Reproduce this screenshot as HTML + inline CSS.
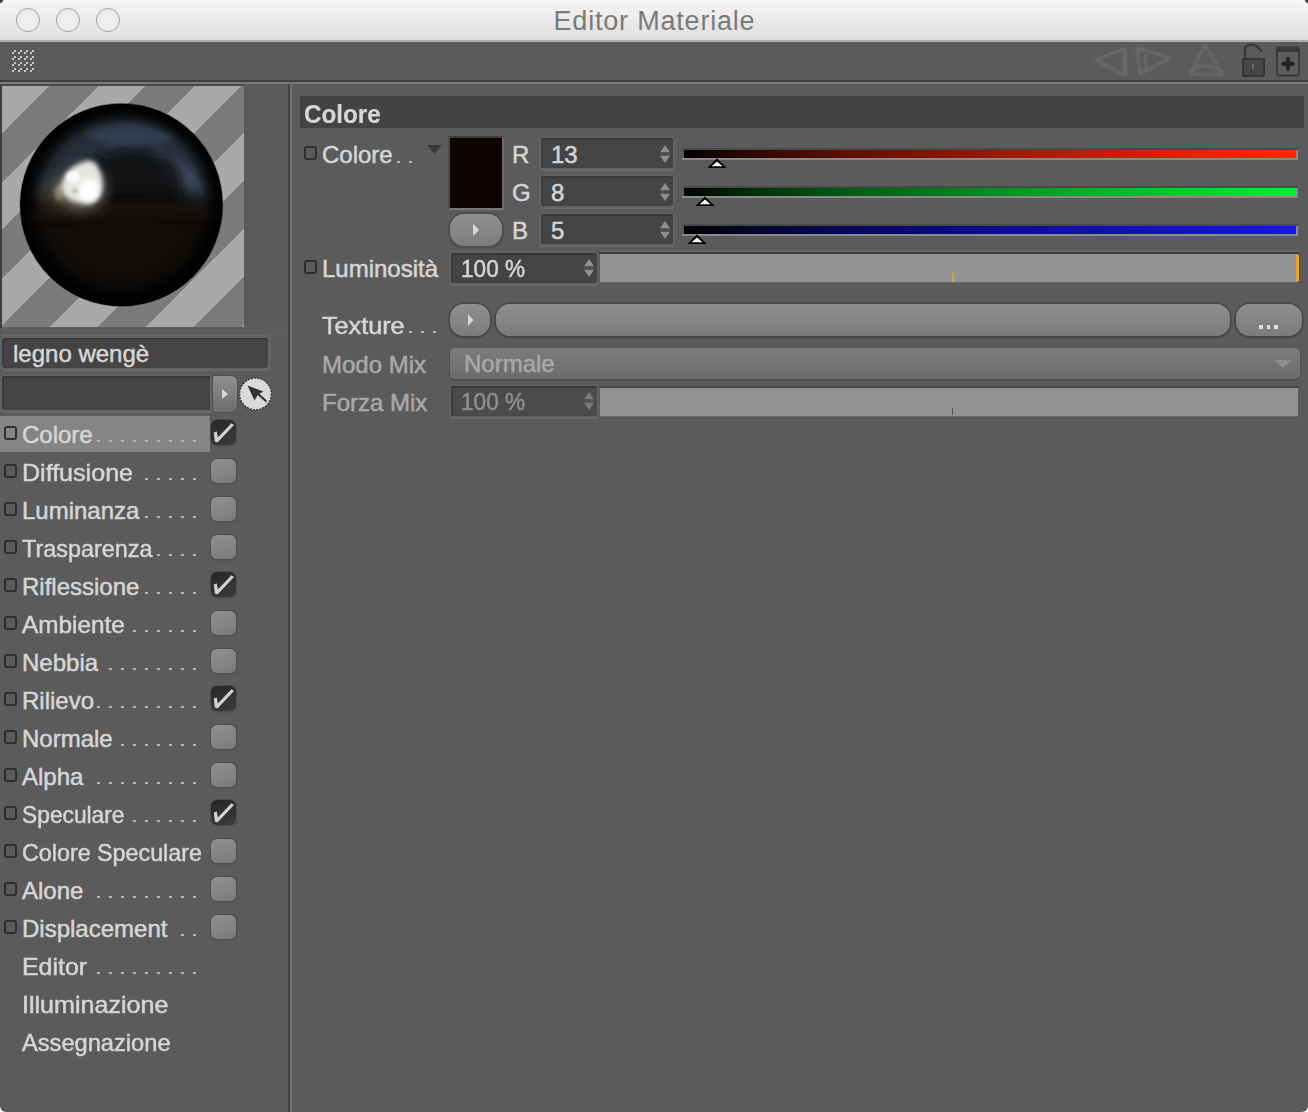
<!DOCTYPE html>
<html><head><meta charset="utf-8">
<style>
*{margin:0;padding:0;box-sizing:border-box}
html,body{width:1308px;height:1112px;overflow:hidden;background:#ffffff}
body{position:relative;font-family:"Liberation Sans",sans-serif}
.a{position:absolute}
#win{position:absolute;left:0;top:0;width:1308px;height:1112px;background:#5b5b5b;border-radius:5px 5px 6px 6px;overflow:hidden}
.lbl{position:absolute;color:#d6d6d6;font-size:24px;line-height:24px;white-space:nowrap;-webkit-text-stroke:0.5px currentColor}
.dim{color:#a9a9a9}
.dot{position:absolute;width:3px;height:2px;background:#b4b4b4}
.sq{position:absolute;width:13px;height:14px;border:2px solid #2f2f2f;border-radius:3px}
.cb{position:absolute;width:25px;height:24px;border-radius:6px;background:linear-gradient(160deg,#909090,#7a7a7a);box-shadow:0 0 0 1px #4e4e4e,0 1px 1px 1px #555}
.cbk{height:25px;background:linear-gradient(150deg,#262626,#3c3c3c)}
.fld{position:absolute;background:#444444;border-radius:2px;box-shadow:inset 0 2px 0 #393939,inset 2px 0 1px #3d3d3d,0 0 0 1.5px #626262,0 1.5px 0 1.5px #6a6a6a}
.spin{position:absolute;width:11px;height:19px}
</style></head><body>
<div id="win">

<div class="a" style="left:0;top:0;width:1308px;height:40px;background:linear-gradient(#f5f5f5,#ececec 45%,#dedede)"></div>
<div class="a" style="left:0;top:40px;width:1308px;height:2px;background:#adadad"></div>
<div class="a" style="left:16px;top:8px;width:24px;height:24px;border-radius:50%;border:1.7px solid #a3a3a3;background:radial-gradient(circle at 50% 60%,#f2f2f2,#ececec 60%,#e6e6e6)"></div>
<div class="a" style="left:56px;top:8px;width:24px;height:24px;border-radius:50%;border:1.7px solid #a3a3a3;background:radial-gradient(circle at 50% 60%,#f2f2f2,#ececec 60%,#e6e6e6)"></div>
<div class="a" style="left:96px;top:8px;width:24px;height:24px;border-radius:50%;border:1.7px solid #a3a3a3;background:radial-gradient(circle at 50% 60%,#f2f2f2,#ececec 60%,#e6e6e6)"></div>
<div class="a" style="left:0;top:7px;width:1308px;text-align:center;font-size:27px;line-height:28px;color:#7a7a7a;letter-spacing:0.8px;padding-left:1px">Editor Materiale</div>
<div class="a" style="left:0;top:42px;width:1308px;height:38px;background:#5b5b5b"></div>
<svg class="a" style="left:0;top:0" width="60" height="80"><rect x="12" y="52" width="2" height="2" fill="#c6c6c6"/><rect x="14" y="50" width="2" height="2" fill="#c6c6c6"/><rect x="12" y="58" width="2" height="2" fill="#c6c6c6"/><rect x="14" y="56" width="2" height="2" fill="#c6c6c6"/><rect x="12" y="64" width="2" height="2" fill="#c6c6c6"/><rect x="14" y="62" width="2" height="2" fill="#c6c6c6"/><rect x="12" y="70" width="2" height="2" fill="#c6c6c6"/><rect x="14" y="68" width="2" height="2" fill="#c6c6c6"/><rect x="18" y="52" width="2" height="2" fill="#c6c6c6"/><rect x="20" y="50" width="2" height="2" fill="#c6c6c6"/><rect x="18" y="58" width="2" height="2" fill="#c6c6c6"/><rect x="20" y="56" width="2" height="2" fill="#c6c6c6"/><rect x="18" y="64" width="2" height="2" fill="#c6c6c6"/><rect x="20" y="62" width="2" height="2" fill="#c6c6c6"/><rect x="18" y="70" width="2" height="2" fill="#c6c6c6"/><rect x="20" y="68" width="2" height="2" fill="#c6c6c6"/><rect x="24" y="52" width="2" height="2" fill="#c6c6c6"/><rect x="26" y="50" width="2" height="2" fill="#c6c6c6"/><rect x="24" y="58" width="2" height="2" fill="#c6c6c6"/><rect x="26" y="56" width="2" height="2" fill="#c6c6c6"/><rect x="24" y="64" width="2" height="2" fill="#c6c6c6"/><rect x="26" y="62" width="2" height="2" fill="#c6c6c6"/><rect x="24" y="70" width="2" height="2" fill="#c6c6c6"/><rect x="26" y="68" width="2" height="2" fill="#c6c6c6"/><rect x="30" y="52" width="2" height="2" fill="#c6c6c6"/><rect x="32" y="50" width="2" height="2" fill="#c6c6c6"/><rect x="30" y="58" width="2" height="2" fill="#c6c6c6"/><rect x="32" y="56" width="2" height="2" fill="#c6c6c6"/><rect x="30" y="64" width="2" height="2" fill="#c6c6c6"/><rect x="32" y="62" width="2" height="2" fill="#c6c6c6"/><rect x="30" y="70" width="2" height="2" fill="#c6c6c6"/><rect x="32" y="68" width="2" height="2" fill="#c6c6c6"/></svg>
<svg class="a" style="left:1090px;top:42px" width="218" height="38">
<defs><filter id="gb" x="-20%" y="-20%" width="140%" height="140%"><feGaussianBlur stdDeviation="0.8"/></filter></defs>
<g fill="none" stroke="#747474" stroke-width="2" stroke-linejoin="round" filter="url(#gb)" opacity="0.85">
<path d="M6 18 L35 6 L36 34 Z"/><path d="M34 14 L35 30"/><path d="M47 6 L80 16 L50 32 Z"/><path d="M55 12 L56 28"/>
<path d="M115 3 L133 33 L100 32 Z"/><path d="M103 27 Q116 20 131 29"/>
</g>
<path d="M155 16.5 L155 7 Q156 2.5 162 2.5 Q167 2.5 171.5 9.5" fill="none" stroke="#363636" stroke-width="2"/>
<rect x="153" y="17" width="21" height="17" fill="#464646" stroke="#333" stroke-width="1.8"/>
<rect x="162" y="22" width="2" height="5" fill="#6a6a6a"/>
<rect x="187" y="5.5" width="22" height="28" rx="1.5" fill="#5c5c5c" stroke="#383838" stroke-width="1.8"/>
<rect x="186" y="5" width="23" height="5" fill="#3a3a3a"/>
<path d="M198 17 V26.5 M193.3 21.7 H202.7" stroke="#262626" stroke-width="4.4" stroke-linecap="round"/>
</svg>
<div class="a" style="left:0;top:80px;width:1308px;height:2px;background:#404040"></div>
<div class="a" style="left:0;top:82px;width:1308px;height:2px;background:#7b7b7b"></div>
<div class="a" style="left:0;top:84px;width:244px;height:2px;background:#4a4a4a"></div>
<div class="a" style="left:288px;top:84px;width:2px;height:1040px;background:#434343"></div>
<div class="a" style="left:290px;top:82px;width:2px;height:1040px;background:#707070"></div>
<div class="a" style="left:0;top:84px;width:2px;height:244px;background:#3e3e3e"></div>
<div class="a" style="left:2px;top:86px;width:242px;height:241px;overflow:hidden;background:repeating-linear-gradient(135deg,#a9a9a9 0px,#a9a9a9 33.9px,#7b7b7b 33.9px,#7b7b7b 67.9px)">
<svg class="a" style="left:0;top:0" width="242" height="241">
<defs>
<clipPath id="sc"><circle cx="119.4" cy="118.9" r="101"/></clipPath>
<filter id="b8" x="-50%" y="-50%" width="200%" height="200%"><feGaussianBlur stdDeviation="8"/></filter>
<filter id="b4" x="-50%" y="-50%" width="200%" height="200%"><feGaussianBlur stdDeviation="4"/></filter>
<filter id="b3" x="-50%" y="-50%" width="200%" height="200%"><feGaussianBlur stdDeviation="2.5"/></filter>
<filter id="b2" x="-50%" y="-50%" width="200%" height="200%"><feGaussianBlur stdDeviation="1.5"/></filter>
<radialGradient id="base" cx="0.5" cy="0.45" r="0.55">
<stop offset="0" stop-color="#15100b"/><stop offset="0.7" stop-color="#0f0c09"/><stop offset="1" stop-color="#050404"/></radialGradient>
<radialGradient id="edge" cx="0.5" cy="0.5" r="0.5">
<stop offset="0.8" stop-color="#000" stop-opacity="0"/><stop offset="0.93" stop-color="#000" stop-opacity="0.75"/><stop offset="1" stop-color="#000" stop-opacity="1"/></radialGradient>
</defs>
<circle cx="119.4" cy="118.9" r="101.8" fill="#1a1a1a" opacity="0.6"/>
<g clip-path="url(#sc)">
<circle cx="119.4" cy="118.9" r="102" fill="url(#base)"/>
<path d="M30 112 Q45 40 120 30 Q195 32 212 105 L208 120 Q150 102 90 104 Z" fill="#28303c" filter="url(#b8)" opacity="0.95"/>
<path d="M80 48 Q130 28 175 50 Q160 62 110 60 Z" fill="#364255" filter="url(#b4)" opacity="0.85"/>
<path d="M150 62 Q192 72 200 104 Q182 102 160 92 Z" fill="#3c4a5f" filter="url(#b4)" opacity="0.95"/>
<path d="M88 78 Q98 66 110 70 Q120 58 132 68 Q142 60 152 70 Q166 64 176 82 Q182 98 178 122 L92 124 Q84 100 88 78 Z" fill="#0c0b0a" filter="url(#b4)" opacity="0.8"/>
<path d="M22 124 Q120 110 218 120 L218 134 Q120 124 22 138 Z" fill="#1d1711" filter="url(#b4)" opacity="0.85"/>
<g transform="translate(1,5)">
<ellipse cx="58" cy="104" rx="22" ry="16" fill="#6b5c3c" filter="url(#b8)" opacity="0.45"/>
<ellipse cx="80" cy="98" rx="20" ry="19" fill="#ffffff" filter="url(#b8)" opacity="0.6"/>
<path d="M58 96 Q62 78 78 72 Q90 66 95 76 Q102 88 98 102 Q92 114 78 112 Q60 108 58 96 Z" fill="#e6e6e2" filter="url(#b3)"/>
<ellipse cx="86" cy="100" rx="10" ry="12" fill="#ffffff" filter="url(#b3)"/>
<ellipse cx="70" cy="86" rx="7" ry="6" fill="#ffffff" filter="url(#b2)" opacity="0.8"/>
<ellipse cx="56" cy="102" rx="4" ry="8" fill="#c4ba88" filter="url(#b3)" opacity="0.6"/>
<ellipse cx="72" cy="100" rx="3.5" ry="2.5" fill="#a0a098" filter="url(#b2)" opacity="0.5"/>
</g>
<path d="M22 124 Q120 110 218 120 L218 134 Q120 124 22 138 Z" fill="#000" filter="url(#b4)" opacity="0.15"/>
<circle cx="119.4" cy="118.9" r="101.5" fill="url(#edge)"/>
</g>
</svg>
</div>
<div class="a" style="left:2px;top:327px;width:286px;height:9px;background:#5e5e5e"></div>
<div class="a" style="left:0px;top:335px;width:271px;height:36px;border-radius:3px;background:#616161;box-shadow:inset 0 1px 0 #686868"></div>
<div class="fld" style="left:2px;top:338px;width:266px;height:30px;border-radius:4px"></div>
<div class="lbl" style="left:13px;top:342px">legno wengè</div>
<div class="fld" style="left:2px;top:376px;width:208px;height:34px;border-radius:3px 0 0 3px"></div>
<div class="a" style="left:213px;top:376px;width:24px;height:36px;border-radius:2px 6px 6px 2px;background:linear-gradient(#8f8f8f,#6d6d6d);box-shadow:0 0 0 1px #4f4f4f"></div>
<svg class="a" style="left:213px;top:376px" width="24" height="36"><path d="M9 13 L15 18 L9 23 Z" fill="#d8d8d8"/></svg>
<svg class="a" style="left:238px;top:376px" width="36" height="36">
<circle cx="17.5" cy="18" r="16" fill="#dadada" stroke="#3a3a3a" stroke-width="1.6" stroke-dasharray="2 1.2"/>
<path d="M9.5 9.5 L25.5 15.5 L20 18.5 L16.5 24.5 Z" fill="#333"/>
<path d="M19 17 L28.5 25.5" stroke="#333" stroke-width="2.2"/>
</svg>
<div class="a" style="left:0;top:416px;width:210px;height:36px;background:#858585"></div>
<div class="sq" style="left:4px;top:426px"></div>
<div class="lbl" style="left:22px;top:423px">Colore</div>
<div class="dot" style="left:97px;top:440px"></div>
<div class="dot" style="left:109px;top:440px"></div>
<div class="dot" style="left:121px;top:440px"></div>
<div class="dot" style="left:133px;top:440px"></div>
<div class="dot" style="left:145px;top:440px"></div>
<div class="dot" style="left:157px;top:440px"></div>
<div class="dot" style="left:169px;top:440px"></div>
<div class="dot" style="left:181px;top:440px"></div>
<div class="dot" style="left:193px;top:440px"></div>
<div class="cb cbk" style="left:211px;top:420px"></div>
<svg class="a" style="left:211px;top:420px" width="25" height="25"><path d="M2.8 12.5 L5.8 11.5 L6.8 17.5 L20.5 3.2 L23 5 L6.5 22.5 L3.8 21.5 Z" fill="#d2d2d2"/></svg>
<div class="sq" style="left:4px;top:464px"></div>
<div class="lbl" style="left:22px;top:461px;transform:scaleX(1.045);transform-origin:1px 0">Diffusione</div>
<div class="dot" style="left:145px;top:478px"></div>
<div class="dot" style="left:157px;top:478px"></div>
<div class="dot" style="left:169px;top:478px"></div>
<div class="dot" style="left:181px;top:478px"></div>
<div class="dot" style="left:193px;top:478px"></div>
<div class="cb" style="left:211px;top:459px"></div>
<div class="sq" style="left:4px;top:502px"></div>
<div class="lbl" style="left:22px;top:499px">Luminanza</div>
<div class="dot" style="left:145px;top:516px"></div>
<div class="dot" style="left:157px;top:516px"></div>
<div class="dot" style="left:169px;top:516px"></div>
<div class="dot" style="left:181px;top:516px"></div>
<div class="dot" style="left:193px;top:516px"></div>
<div class="cb" style="left:211px;top:497px"></div>
<div class="sq" style="left:4px;top:540px"></div>
<div class="lbl" style="left:22px;top:537px;transform:scaleX(0.974);transform-origin:1px 0">Trasparenza</div>
<div class="dot" style="left:157px;top:554px"></div>
<div class="dot" style="left:169px;top:554px"></div>
<div class="dot" style="left:181px;top:554px"></div>
<div class="dot" style="left:193px;top:554px"></div>
<div class="cb" style="left:211px;top:535px"></div>
<div class="sq" style="left:4px;top:578px"></div>
<div class="lbl" style="left:22px;top:575px">Riflessione</div>
<div class="dot" style="left:145px;top:592px"></div>
<div class="dot" style="left:157px;top:592px"></div>
<div class="dot" style="left:169px;top:592px"></div>
<div class="dot" style="left:181px;top:592px"></div>
<div class="dot" style="left:193px;top:592px"></div>
<div class="cb cbk" style="left:211px;top:572px"></div>
<svg class="a" style="left:211px;top:572px" width="25" height="25"><path d="M2.8 12.5 L5.8 11.5 L6.8 17.5 L20.5 3.2 L23 5 L6.5 22.5 L3.8 21.5 Z" fill="#d2d2d2"/></svg>
<div class="sq" style="left:4px;top:616px"></div>
<div class="lbl" style="left:22px;top:613px;transform:scaleX(1.015);transform-origin:1px 0">Ambiente</div>
<div class="dot" style="left:133px;top:630px"></div>
<div class="dot" style="left:145px;top:630px"></div>
<div class="dot" style="left:157px;top:630px"></div>
<div class="dot" style="left:169px;top:630px"></div>
<div class="dot" style="left:181px;top:630px"></div>
<div class="dot" style="left:193px;top:630px"></div>
<div class="cb" style="left:211px;top:611px"></div>
<div class="sq" style="left:4px;top:654px"></div>
<div class="lbl" style="left:22px;top:651px">Nebbia</div>
<div class="dot" style="left:109px;top:668px"></div>
<div class="dot" style="left:121px;top:668px"></div>
<div class="dot" style="left:133px;top:668px"></div>
<div class="dot" style="left:145px;top:668px"></div>
<div class="dot" style="left:157px;top:668px"></div>
<div class="dot" style="left:169px;top:668px"></div>
<div class="dot" style="left:181px;top:668px"></div>
<div class="dot" style="left:193px;top:668px"></div>
<div class="cb" style="left:211px;top:649px"></div>
<div class="sq" style="left:4px;top:692px"></div>
<div class="lbl" style="left:22px;top:689px">Rilievo</div>
<div class="dot" style="left:97px;top:706px"></div>
<div class="dot" style="left:109px;top:706px"></div>
<div class="dot" style="left:121px;top:706px"></div>
<div class="dot" style="left:133px;top:706px"></div>
<div class="dot" style="left:145px;top:706px"></div>
<div class="dot" style="left:157px;top:706px"></div>
<div class="dot" style="left:169px;top:706px"></div>
<div class="dot" style="left:181px;top:706px"></div>
<div class="dot" style="left:193px;top:706px"></div>
<div class="cb cbk" style="left:211px;top:686px"></div>
<svg class="a" style="left:211px;top:686px" width="25" height="25"><path d="M2.8 12.5 L5.8 11.5 L6.8 17.5 L20.5 3.2 L23 5 L6.5 22.5 L3.8 21.5 Z" fill="#d2d2d2"/></svg>
<div class="sq" style="left:4px;top:730px"></div>
<div class="lbl" style="left:22px;top:727px">Normale</div>
<div class="dot" style="left:121px;top:744px"></div>
<div class="dot" style="left:133px;top:744px"></div>
<div class="dot" style="left:145px;top:744px"></div>
<div class="dot" style="left:157px;top:744px"></div>
<div class="dot" style="left:169px;top:744px"></div>
<div class="dot" style="left:181px;top:744px"></div>
<div class="dot" style="left:193px;top:744px"></div>
<div class="cb" style="left:211px;top:725px"></div>
<div class="sq" style="left:4px;top:768px"></div>
<div class="lbl" style="left:22px;top:765px">Alpha</div>
<div class="dot" style="left:97px;top:782px"></div>
<div class="dot" style="left:109px;top:782px"></div>
<div class="dot" style="left:121px;top:782px"></div>
<div class="dot" style="left:133px;top:782px"></div>
<div class="dot" style="left:145px;top:782px"></div>
<div class="dot" style="left:157px;top:782px"></div>
<div class="dot" style="left:169px;top:782px"></div>
<div class="dot" style="left:181px;top:782px"></div>
<div class="dot" style="left:193px;top:782px"></div>
<div class="cb" style="left:211px;top:763px"></div>
<div class="sq" style="left:4px;top:806px"></div>
<div class="lbl" style="left:22px;top:803px;transform:scaleX(0.948);transform-origin:1px 0">Speculare</div>
<div class="dot" style="left:133px;top:820px"></div>
<div class="dot" style="left:145px;top:820px"></div>
<div class="dot" style="left:157px;top:820px"></div>
<div class="dot" style="left:169px;top:820px"></div>
<div class="dot" style="left:181px;top:820px"></div>
<div class="dot" style="left:193px;top:820px"></div>
<div class="cb cbk" style="left:211px;top:800px"></div>
<svg class="a" style="left:211px;top:800px" width="25" height="25"><path d="M2.8 12.5 L5.8 11.5 L6.8 17.5 L20.5 3.2 L23 5 L6.5 22.5 L3.8 21.5 Z" fill="#d2d2d2"/></svg>
<div class="sq" style="left:4px;top:844px"></div>
<div class="lbl" style="left:22px;top:841px;transform:scaleX(0.97);transform-origin:1px 0">Colore Speculare</div>
<div class="cb" style="left:211px;top:839px"></div>
<div class="sq" style="left:4px;top:882px"></div>
<div class="lbl" style="left:22px;top:879px">Alone</div>
<div class="dot" style="left:97px;top:896px"></div>
<div class="dot" style="left:109px;top:896px"></div>
<div class="dot" style="left:121px;top:896px"></div>
<div class="dot" style="left:133px;top:896px"></div>
<div class="dot" style="left:145px;top:896px"></div>
<div class="dot" style="left:157px;top:896px"></div>
<div class="dot" style="left:169px;top:896px"></div>
<div class="dot" style="left:181px;top:896px"></div>
<div class="dot" style="left:193px;top:896px"></div>
<div class="cb" style="left:211px;top:877px"></div>
<div class="sq" style="left:4px;top:920px"></div>
<div class="lbl" style="left:22px;top:917px">Displacement</div>
<div class="dot" style="left:181px;top:934px"></div>
<div class="dot" style="left:193px;top:934px"></div>
<div class="cb" style="left:211px;top:915px"></div>
<div class="lbl" style="left:22px;top:955px;transform:scaleX(1.04);transform-origin:1px 0">Editor</div>
<div class="dot" style="left:97px;top:972px"></div>
<div class="dot" style="left:109px;top:972px"></div>
<div class="dot" style="left:121px;top:972px"></div>
<div class="dot" style="left:133px;top:972px"></div>
<div class="dot" style="left:145px;top:972px"></div>
<div class="dot" style="left:157px;top:972px"></div>
<div class="dot" style="left:169px;top:972px"></div>
<div class="dot" style="left:181px;top:972px"></div>
<div class="dot" style="left:193px;top:972px"></div>
<div class="lbl" style="left:22px;top:993px;transform:scaleX(1.045);transform-origin:1px 0">Illuminazione</div>
<div class="lbl" style="left:22px;top:1031px;transform:scaleX(0.985);transform-origin:1px 0">Assegnazione</div>
<div class="a" style="left:300px;top:96px;width:1004px;height:32px;background:#434343"></div>
<div class="lbl" style="left:304px;top:102px;font-weight:bold;font-size:25.5px;-webkit-text-stroke:0.2px currentColor;transform:scaleX(0.95);transform-origin:0 0">Colore</div>
<div class="sq" style="left:304px;top:146px"></div>
<div class="lbl" style="left:322px;top:143px">Colore</div>
<div class="dot" style="left:397px;top:161px"></div><div class="dot" style="left:409px;top:161px"></div>
<svg class="a" style="left:426px;top:144px" width="18" height="12"><path d="M1 1 L16 1 L8.5 10 Z" fill="#3a3a3a"/></svg>
<div class="a" style="left:448px;top:136px;width:56px;height:74px;background:#0e0503;border:2px solid;border-color:#3e3e3e #6a6a6a #767676 #4c4c4c"></div>
<div class="a" style="left:450px;top:214px;width:52px;height:32px;border-radius:14px;background:linear-gradient(#8f8f8f,#848484 60%,#7c7c7c);box-shadow:0 0 0 1.5px #4a4a4a,0 1px 1px 1.5px #4f4f4f"></div>
<svg class="a" style="left:450px;top:214px" width="52" height="32"><path d="M23 10 L29 16 L23 22 Z" fill="#d8d8d8"/></svg>
<div class="lbl" style="left:512px;top:143px">R</div>
<div class="fld" style="left:541px;top:138px;width:132px;height:30px"></div>
<div class="lbl" style="left:551px;top:143px">13</div>
<svg class="a" style="left:659px;top:144px" width="12" height="20"><path d="M6 1 L11 8.3 L1 8.3 Z M6 19 L11 11.7 L1 11.7 Z" fill="#8f8f8f"/><rect x="1" y="9.3" width="10" height="1.4" fill="#555"/></svg>
<div class="a" style="left:682px;top:148px;width:616px;height:2px;background:#4a4a4a"></div>
<div class="a" style="left:684px;top:150px;width:612px;height:8px;background:linear-gradient(90deg,rgb(0,0,0) 0%,rgb(45,7,0) 10%,rgb(90,15,0) 25%,rgb(128,21,0) 40%,rgb(163,27,0) 55%,rgb(195,32,0) 70%,rgb(226,37,0) 85%,rgb(255,42,0) 100%)"></div>
<div class="a" style="left:682px;top:158px;width:616px;height:2px;background:#8a8a8a"></div>
<div class="a" style="left:1296px;top:150px;width:2px;height:8px;background:#8a8a8a"></div>
<svg class="a" style="left:707px;top:158px" width="20" height="11"><path d="M10 0.5 L19.5 10 L0.5 10 Z" fill="#000"/><path d="M10 3.5 L15.5 8.2 L4.5 8.2 Z" fill="#fff"/></svg>
<div class="lbl" style="left:512px;top:181px">G</div>
<div class="fld" style="left:541px;top:176px;width:132px;height:30px"></div>
<div class="lbl" style="left:551px;top:181px">8</div>
<svg class="a" style="left:659px;top:182px" width="12" height="20"><path d="M6 1 L11 8.3 L1 8.3 Z M6 19 L11 11.7 L1 11.7 Z" fill="#8f8f8f"/><rect x="1" y="9.3" width="10" height="1.4" fill="#555"/></svg>
<div class="a" style="left:682px;top:186px;width:616px;height:2px;background:#4a4a4a"></div>
<div class="a" style="left:684px;top:188px;width:612px;height:8px;background:linear-gradient(90deg,rgb(0,0,0) 0%,rgb(0,43,9) 10%,rgb(0,85,18) 25%,rgb(0,121,25) 40%,rgb(0,153,32) 55%,rgb(0,184,38) 70%,rgb(0,212,44) 85%,rgb(0,240,50) 100%)"></div>
<div class="a" style="left:682px;top:196px;width:616px;height:2px;background:#8a8a8a"></div>
<div class="a" style="left:1296px;top:188px;width:2px;height:8px;background:#8a8a8a"></div>
<svg class="a" style="left:695px;top:196px" width="20" height="11"><path d="M10 0.5 L19.5 10 L0.5 10 Z" fill="#000"/><path d="M10 3.5 L15.5 8.2 L4.5 8.2 Z" fill="#fff"/></svg>
<div class="lbl" style="left:512px;top:219px">B</div>
<div class="fld" style="left:541px;top:214px;width:132px;height:30px"></div>
<div class="lbl" style="left:551px;top:219px">5</div>
<svg class="a" style="left:659px;top:220px" width="12" height="20"><path d="M6 1 L11 8.3 L1 8.3 Z M6 19 L11 11.7 L1 11.7 Z" fill="#8f8f8f"/><rect x="1" y="9.3" width="10" height="1.4" fill="#555"/></svg>
<div class="a" style="left:682px;top:224px;width:616px;height:2px;background:#4a4a4a"></div>
<div class="a" style="left:684px;top:226px;width:612px;height:8px;background:linear-gradient(90deg,rgb(0,0,0) 0%,rgb(4,4,43) 10%,rgb(7,7,86) 25%,rgb(10,10,122) 40%,rgb(13,13,155) 55%,rgb(15,15,185) 70%,rgb(18,18,214) 85%,rgb(20,20,242) 100%)"></div>
<div class="a" style="left:682px;top:234px;width:616px;height:2px;background:#8a8a8a"></div>
<div class="a" style="left:1296px;top:226px;width:2px;height:8px;background:#8a8a8a"></div>
<svg class="a" style="left:687px;top:234px" width="20" height="11"><path d="M10 0.5 L19.5 10 L0.5 10 Z" fill="#000"/><path d="M10 3.5 L15.5 8.2 L4.5 8.2 Z" fill="#fff"/></svg>
<div class="sq" style="left:304px;top:260px"></div>
<div class="lbl" style="left:322px;top:257px">Luminosità</div>
<div class="fld" style="left:451px;top:253px;width:146px;height:30px"></div>
<div class="lbl" style="left:461px;top:257px;transform:scaleX(0.94);transform-origin:1px 0">100 %</div>
<svg class="a" style="left:583px;top:258px" width="12" height="20"><path d="M6 1 L11 8.3 L1 8.3 Z M6 19 L11 11.7 L1 11.7 Z" fill="#8f8f8f"/><rect x="1" y="9.3" width="10" height="1.4" fill="#555"/></svg>
<div class="a" style="left:599px;top:250px;width:700px;height:2px;background:#656565"></div>
<div class="a" style="left:599px;top:252px;width:700px;height:2px;background:#3c3c3c"></div>
<div class="a" style="left:600px;top:254px;width:698px;height:28px;background:#939393;box-shadow:0 1px 0 #6a6a6a"></div>
<div class="a" style="left:1296px;top:255px;width:3px;height:26px;background:#e8a42a"></div>
<div class="a" style="left:952px;top:273px;width:2px;height:9px;background:#cfa04a"></div>
<div class="lbl" style="left:322px;top:314px;transform:scaleX(1.05);transform-origin:1px 0">Texture</div>
<div class="dot" style="left:409px;top:331px"></div>
<div class="dot" style="left:421px;top:331px"></div>
<div class="dot" style="left:433px;top:331px"></div>
<div class="a" style="left:450px;top:304px;width:40px;height:32px;border-radius:14px;background:linear-gradient(#8f8f8f,#7c7c7c);box-shadow:0 0 0 1.5px #474747,0 1px 1px 1.5px #4d4d4d"></div>
<svg class="a" style="left:450px;top:304px" width="40" height="32"><path d="M18 10 L23.5 16 L18 22 Z" fill="#d8d8d8"/></svg>
<div class="a" style="left:496px;top:304px;width:734px;height:32px;border-radius:14px;background:linear-gradient(#8f8f8f,#828282 60%,#7c7c7c);box-shadow:0 0 0 1.5px #474747,0 1px 1px 1.5px #4d4d4d"></div>
<div class="a" style="left:1236px;top:304px;width:66px;height:32px;border-radius:14px;background:linear-gradient(#8f8f8f,#828282 60%,#7c7c7c);box-shadow:0 0 0 1.5px #474747,0 1px 1px 1.5px #4d4d4d"></div>
<div class="a" style="left:1259px;top:325px;width:3.5px;height:3.5px;background:#e0e0e0"></div>
<div class="a" style="left:1266.5px;top:325px;width:3.5px;height:3.5px;background:#e0e0e0"></div>
<div class="a" style="left:1274px;top:325px;width:3.5px;height:3.5px;background:#e0e0e0"></div>
<div class="lbl dim" style="left:322px;top:353px">Modo Mix</div>
<div class="a" style="left:450px;top:348px;width:850px;height:31px;border-radius:5px;background:linear-gradient(#7c7c7c,#6c6c6c);box-shadow:0 1px 0 1px #4f4f4f"></div>
<div class="lbl dim" style="left:464px;top:352px">Normale</div>
<svg class="a" style="left:1273px;top:359px" width="20" height="10"><path d="M1 1 L19 1 L10 9 Z" fill="#8e8e8e"/></svg>
<div class="lbl dim" style="left:322px;top:391px">Forza Mix</div>
<div class="fld" style="left:451px;top:386px;width:146px;height:30px;background:#4b4b4b"></div>
<div class="lbl dim" style="left:461px;top:390px;color:#8f8f8f;transform:scaleX(0.94);transform-origin:1px 0">100 %</div>
<svg class="a" style="left:583px;top:391px" width="12" height="20"><path d="M6 1 L11 8.3 L1 8.3 Z M6 19 L11 11.7 L1 11.7 Z" fill="#7a7a7a"/><rect x="1" y="9.3" width="10" height="1.4" fill="#555"/></svg>
<div class="a" style="left:599px;top:386px;width:700px;height:2px;background:#4a4a4a"></div>
<div class="a" style="left:600px;top:388px;width:698px;height:28px;background:#939393;box-shadow:0 1px 0 #6a6a6a"></div>
<div class="a" style="left:952px;top:408px;width:1px;height:7px;background:#555"></div>
</div>
<div class="a" style="left:0;top:0;width:8px;height:8px;background:radial-gradient(circle at 0 0,#3a3a3a 0,#3a3a3a 2px,rgba(255,255,255,0.7) 4px,rgba(255,255,255,0) 7px)"></div>
<div class="a" style="left:1300px;top:0;width:8px;height:8px;background:radial-gradient(circle at 100% 0,#3a3a3a 0,#3a3a3a 2px,rgba(255,255,255,0.7) 4px,rgba(255,255,255,0) 7px)"></div>
</body></html>
